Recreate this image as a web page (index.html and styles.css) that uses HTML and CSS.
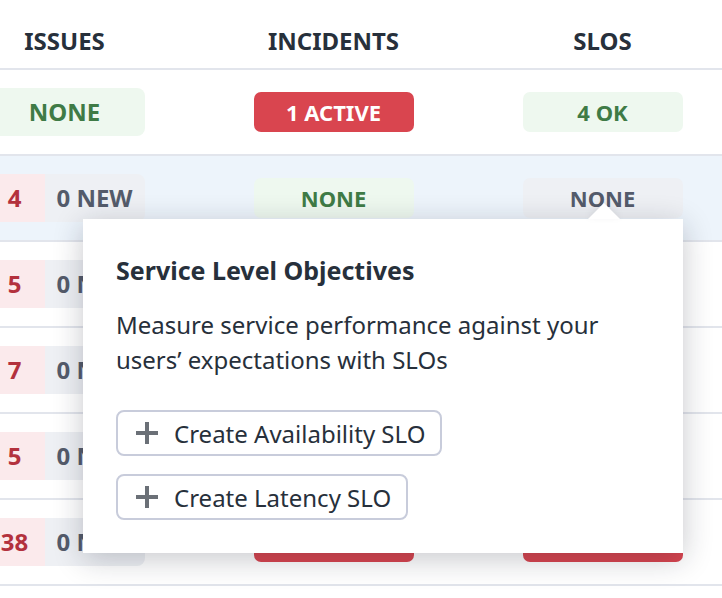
FILE: index.html
```html
<!DOCTYPE html>
<html lang="en">
<head>
<meta charset="utf-8">
<title>Services</title>
<link rel="stylesheet" href="styles.css">
</head>
<body>
<div class="table">
  <div class="row head">
    <div class="cell">ISSUES</div>
    <div class="cell">INCIDENTS</div>
    <div class="cell">SLOS</div>
  </div>
  <div class="row">
    <div class="cell"><span class="pill tall ok">NONE</span></div>
    <div class="cell"><span class="pill bad">1 ACTIVE</span></div>
    <div class="cell"><span class="pill ok">4 OK</span></div>
  </div>
  <div class="row hover">
    <div class="cell"><span class="split"><span class="count">4</span><span class="new">0 NEW</span></span></div>
    <div class="cell"><span class="pill ok">NONE</span></div>
    <div class="cell"><span class="pill muted">NONE</span></div>
  </div>
  <div class="row">
    <div class="cell"><span class="split"><span class="count">5</span><span class="new">0 NEW</span></span></div>
    <div class="cell"></div>
    <div class="cell"></div>
  </div>
  <div class="row">
    <div class="cell"><span class="split"><span class="count">7</span><span class="new">0 NEW</span></span></div>
    <div class="cell"></div>
    <div class="cell"></div>
  </div>
  <div class="row">
    <div class="cell"><span class="split"><span class="count">5</span><span class="new">0 NEW</span></span></div>
    <div class="cell"></div>
    <div class="cell"></div>
  </div>
  <div class="row">
    <div class="cell"><span class="split"><span class="count">38</span><span class="new">0 NEW</span></span></div>
    <div class="cell"><span class="pill bad"></span></div>
    <div class="cell"><span class="pill bad"></span></div>
  </div>
</div>

<div class="popover">
  <h2 class="pop-title">Service Level Objectives</h2>
  <p class="pop-text">Measure service performance against your users’ expectations with SLOs</p>
  <div class="pop-actions">
    <button class="btn" type="button"><svg class="plus" width="24" height="24" viewBox="0 0 24 24"><path d="M12 1v22M1 12h22" stroke="currentColor" stroke-width="4" fill="none"/></svg><span>Create Availability SLO</span></button>
    <button class="btn" type="button"><svg class="plus" width="24" height="24" viewBox="0 0 24 24"><path d="M12 1v22M1 12h22" stroke="currentColor" stroke-width="4" fill="none"/></svg><span>Create Latency SLO</span></button>
  </div>
</div>
</body>
</html>
```

FILE: styles.css
```css
html, body {
  margin: 0;
  padding: 0;
  overflow: hidden;
  background: #ffffff;
}

body {
  font-family: "Noto Sans", "Open Sans", sans-serif;
  color: #27303b;
  width: 722px;
  height: 598px;
  position: relative;
}

.table {
  margin-left: -70px;
  width: 807px;
}

.row {
  display: grid;
  grid-template-columns: 269px 269px 269px;
  height: 84px;
  border-bottom: 2px solid #e2e5ec;
}

.row.head {
  height: 54px;
  padding-top: 14px;
}

.row.hover {
  background: #edf4fb;
}

.cell {
  display: flex;
  align-items: center;
  justify-content: center;
}

.head .cell {
  font-size: 24px;
  font-weight: 700;
  line-height: 32px;
  color: #27303b;
}

.pill {
  width: 160px;
  height: 40px;
  border-radius: 7px;
  display: flex;
  align-items: center;
  justify-content: center;
  font-size: 22px;
  font-weight: 700;
  line-height: 30px;
}

.pill.tall {
  height: 48px;
  border-radius: 8px;
  font-size: 24px;
  line-height: 32px;
}

.ok {
  background: #eef8ef;
  color: #3f7b46;
}

.bad {
  background: #d9454f;
  color: #ffffff;
}

.muted {
  background: #eef0f4;
  color: #545b6b;
}

.split {
  display: flex;
  width: 160px;
  height: 48px;
  border-radius: 8px;
  overflow: hidden;
  font-size: 24px;
  font-weight: 700;
  line-height: 32px;
}

.split .count {
  width: 60px;
  background: #fbeaec;
  color: #b3313d;
  display: flex;
  align-items: center;
  justify-content: center;
}

.split .new {
  flex: 1;
  background: #eef0f4;
  color: #545b6b;
  display: flex;
  align-items: center;
  justify-content: center;
}

.popover {
  position: absolute;
  left: 83px;
  top: 219px;
  width: 600px;
  height: 334px;
  box-sizing: border-box;
  padding: 36px 33px 32px;
  background: #ffffff;
  box-shadow: 0 6px 28px rgba(20, 25, 40, 0.24);
}

.popover::before {
  content: "";
  position: absolute;
  top: -16px;
  left: 505px;
  width: 0;
  height: 0;
  border-left: 16px solid transparent;
  border-right: 16px solid transparent;
  border-bottom: 16px solid #ffffff;
  filter: drop-shadow(0 -2px 3px rgba(20, 25, 40, 0.08));
}

.pop-title {
  margin: 0;
  font-size: 25px;
  font-weight: 700;
  line-height: 30px;
  color: #27303b;
}

.pop-text {
  margin: 22px 0 0;
  font-size: 24px;
  line-height: 35px;
  color: #27303b;
}

.pop-actions {
  margin-top: 33px;
  display: flex;
  flex-direction: column;
  align-items: flex-start;
  gap: 18px;
}

.btn {
  display: flex;
  align-items: center;
  gap: 15px;
  height: 46px;
  box-sizing: border-box;
  padding: 0 15px 0 17px;
  border: 2px solid #c8ccdb;
  border-radius: 8px;
  background: #ffffff;
  font-family: "Noto Sans", "Open Sans", sans-serif;
  font-size: 24px;
  color: #27303b;
  cursor: pointer;
}

.plus {
  color: #6b7077;
  flex: none;
}
```
